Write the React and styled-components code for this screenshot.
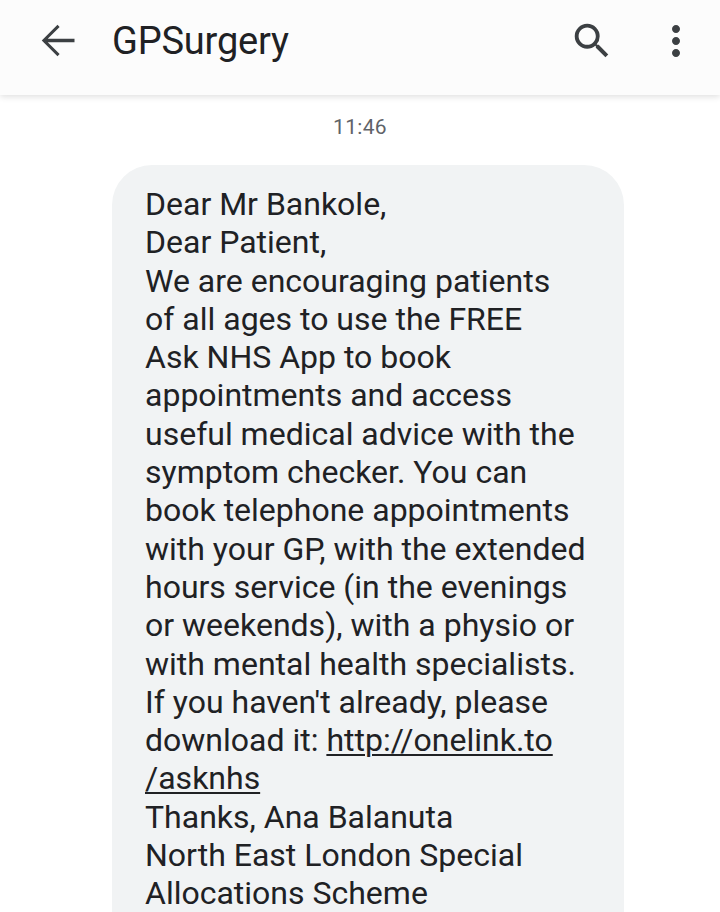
import React from "react";
import styled, { createGlobalStyle } from "styled-components";

const Global = createGlobalStyle`
  html, body {
    margin: 0;
    padding: 0;
    background: #ffffff;
    font-family: Roboto, "Noto Sans", sans-serif;
  }
`;

const Page = styled.div`
  width: 720px;
  height: 912px;
  overflow: hidden;
  background: #ffffff;
`;

const TopBar = styled.header`
  height: 95px;
  display: flex;
  align-items: center;
  background: #fcfcfc;
  box-shadow: 0 2px 6px rgba(0, 0, 0, 0.12);
  position: relative;
  z-index: 1;
  padding: 0 29px 14px 30px;
  box-sizing: border-box;
`;

const IconButton = styled.div`
  width: ${props => props.size || 54}px;
  height: 54px;
  display: flex;
  align-items: center;
  justify-content: center;
  color: #3c4043;

  svg {
    flex-shrink: 0;
  }
`;

const Title = styled.h1`
  flex: 1;
  margin: 0 0 0 28px;
  font-family: Roboto, sans-serif;
  font-weight: 400;
  font-size: 38px;
  letter-spacing: -0.2px;
  color: #202124;
`;

const Actions = styled.div`
  display: flex;
  align-items: center;
  gap: 42px;
`;

const Thread = styled.main`
  display: flex;
  flex-direction: column;
  align-items: center;
`;

const Stamp = styled.div`
  margin-top: 20px;
  font-size: 21px;
  color: #5f6368;
  letter-spacing: 0.3px;
`;

const Bubble = styled.div`
  margin-top: 26px;
  width: 512px;
  box-sizing: border-box;
  margin-left: 16px;
  padding: 20px 20px 40px 33px;
  background: #f1f3f4;
  border-radius: 40px;
  font-size: 32px;
  line-height: 38.3px;
  color: #202124;
`;

const Line = styled.span`
  display: block;
  white-space: nowrap;
`;

const Link = styled.span`
  text-decoration: underline;
  text-underline-offset: 3px;
  text-decoration-thickness: 1.5px;
`;

const lines = [
  "Dear Mr Bankole,",
  "Dear Patient,",
  "We are encouraging patients",
  "of all ages to use the FREE",
  "Ask NHS App to book",
  "appointments and access",
  "useful medical advice with the",
  "symptom checker. You can",
  "book telephone appointments",
  "with your GP, with the extended",
  "hours service (in the evenings",
  "or weekends), with a physio or",
  "with mental health specialists.",
  "If you haven't already, please",
];

const closing = [
  "Thanks, Ana Balanuta",
  "North East London Special",
  "Allocations Scheme",
];

const App = () => (
  <Page>
    <Global />
    <TopBar>
      <IconButton>
        <svg width="51" height="51" viewBox="0 0 24 24" fill="currentColor">
          <path d="M20 11.2H7.4l5.6-5.6L12 4.6 4.6 12l7.4 7.4 1-1-5.6-5.6H20v-1.6z" />
        </svg>
      </IconButton>
      <Title>GPSurgery</Title>
      <Actions>
        <IconButton>
          <svg width="46" height="46" viewBox="0 0 24 24" fill="currentColor">
            <path d="M15.5 14h-.79l-.28-.27A6.471 6.471 0 0 0 16 9.5 6.5 6.5 0 1 0 9.5 16c1.61 0 3.09-.59 4.23-1.57l.27.28v.79l5 4.99L20.49 19l-4.99-5zm-6 0C7.01 14 5 11.99 5 9.5S7.01 5 9.5 5 14 7.01 14 9.5 11.99 14 9.5 14z" />
          </svg>
        </IconButton>
        <IconButton size={30}>
          <svg width="48" height="48" viewBox="0 0 24 24" fill="currentColor">
            <path d="M12 8c1.1 0 2-.9 2-2s-.9-2-2-2-2 .9-2 2 .9 2 2 2zm0 2c-1.1 0-2 .9-2 2s.9 2 2 2 2-.9 2-2-.9-2-2-2zm0 6c-1.1 0-2 .9-2 2s.9 2 2 2 2-.9 2-2-.9-2-2-2z" />
          </svg>
        </IconButton>
      </Actions>
    </TopBar>
    <Thread>
      <Stamp>11:46</Stamp>
      <Bubble>
        {lines.map(text => (
          <Line key={text}>{text}</Line>
        ))}
        <Line>
          download it: <Link>http://onelink.to</Link>
        </Line>
        <Line>
          <Link>/asknhs</Link>
        </Line>
        {closing.map(text => (
          <Line key={text}>{text}</Line>
        ))}
      </Bubble>
    </Thread>
  </Page>
);

export default App;
